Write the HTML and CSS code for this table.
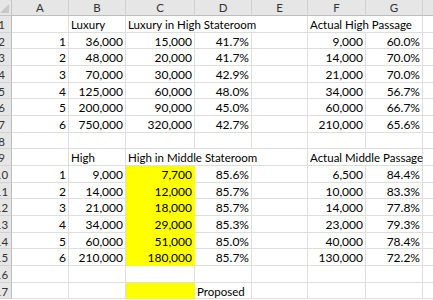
FILE: index.html
```html
<!DOCTYPE html>
<html>
<head>
<meta charset="utf-8">
<link rel="stylesheet" href="styles.css">
</head>
<body>
<div class="sheet">
  <div class="corner"></div><div class="ch">A</div><div class="ch">B</div><div class="ch">C</div><div class="ch">D</div><div class="ch">E</div><div class="ch">F</div><div class="ch">G</div><div class="ch last"></div>

  <div class="rh">1</div><div class="c"></div><div class="c">Luxury</div><div class="c span3">Luxury in High Stateroom</div><div class="c span2">Actual High Passage</div><div class="c"></div>
  <div class="rh">2</div><div class="c n">1</div><div class="c n">36,000</div><div class="c n">15,000</div><div class="c n">41.7%</div><div class="c"></div><div class="c n">9,000</div><div class="c n">60.0%</div><div class="c"></div>
  <div class="rh">3</div><div class="c n">2</div><div class="c n">48,000</div><div class="c n">20,000</div><div class="c n">41.7%</div><div class="c"></div><div class="c n">14,000</div><div class="c n">70.0%</div><div class="c"></div>
  <div class="rh">4</div><div class="c n">3</div><div class="c n">70,000</div><div class="c n">30,000</div><div class="c n">42.9%</div><div class="c"></div><div class="c n">21,000</div><div class="c n">70.0%</div><div class="c"></div>
  <div class="rh">5</div><div class="c n">4</div><div class="c n">125,000</div><div class="c n">60,000</div><div class="c n">48.0%</div><div class="c"></div><div class="c n">34,000</div><div class="c n">56.7%</div><div class="c"></div>
  <div class="rh">6</div><div class="c n">5</div><div class="c n">200,000</div><div class="c n">90,000</div><div class="c n">45.0%</div><div class="c"></div><div class="c n">60,000</div><div class="c n">66.7%</div><div class="c"></div>
  <div class="rh">7</div><div class="c n">6</div><div class="c n">750,000</div><div class="c n">320,000</div><div class="c n">42.7%</div><div class="c"></div><div class="c n">210,000</div><div class="c n">65.6%</div><div class="c"></div>
  <div class="rh">8</div><div class="c"></div><div class="c"></div><div class="c"></div><div class="c"></div><div class="c"></div><div class="c"></div><div class="c"></div><div class="c"></div>

  <div class="rh">9</div><div class="c"></div><div class="c">High</div><div class="c span3">High in Middle Stateroom</div><div class="c span2">Actual Middle Passage</div><div class="c"></div>
  <div class="rh">10</div><div class="c n">1</div><div class="c n">9,000</div><div class="c n y">7,700</div><div class="c n">85.6%</div><div class="c"></div><div class="c n">6,500</div><div class="c n">84.4%</div><div class="c"></div>
  <div class="rh">11</div><div class="c n">2</div><div class="c n">14,000</div><div class="c n y">12,000</div><div class="c n">85.7%</div><div class="c"></div><div class="c n">10,000</div><div class="c n">83.3%</div><div class="c"></div>
  <div class="rh">12</div><div class="c n">3</div><div class="c n">21,000</div><div class="c n y">18,000</div><div class="c n">85.7%</div><div class="c"></div><div class="c n">14,000</div><div class="c n">77.8%</div><div class="c"></div>
  <div class="rh">13</div><div class="c n">4</div><div class="c n">34,000</div><div class="c n y">29,000</div><div class="c n">85.3%</div><div class="c"></div><div class="c n">23,000</div><div class="c n">79.3%</div><div class="c"></div>
  <div class="rh">14</div><div class="c n">5</div><div class="c n">60,000</div><div class="c n y">51,000</div><div class="c n">85.0%</div><div class="c"></div><div class="c n">40,000</div><div class="c n">78.4%</div><div class="c"></div>
  <div class="rh">15</div><div class="c n">6</div><div class="c n">210,000</div><div class="c n y">180,000</div><div class="c n">85.7%</div><div class="c"></div><div class="c n">130,000</div><div class="c n">72.2%</div><div class="c"></div>
  <div class="rh">16</div><div class="c"></div><div class="c"></div><div class="c"></div><div class="c"></div><div class="c"></div><div class="c"></div><div class="c"></div><div class="c"></div>
  <div class="rh">17</div><div class="c"></div><div class="c"></div><div class="c y"></div><div class="c">Proposed</div><div class="c"></div><div class="c"></div><div class="c"></div><div class="c"></div>
</div>
</body>
</html>
```
FILE: styles.css
```css
html, body {
  margin: 0;
  padding: 0;
  background: #ffffff;
  overflow: hidden;
  width: 433px;
  height: 300px;
}
.sheet {
  margin-left: -8px;
  display: grid;
  grid-template-columns: 20px 57px 57px 69px 57px 56px 58px 57px 40px;
  grid-template-rows: 16px;
  grid-auto-rows: 16.667px;
  font-family: Lato, "Open Sans", sans-serif;
  font-size: 11.5px;
  color: #000;
}
.corner {
  background: #e6e6e6;
  border-right: 1px solid #c4c4c4;
  border-bottom: 1px solid #c4c4c4;
  box-sizing: border-box;
  position: relative;
}
.corner::after {
  content: "";
  position: absolute;
  right: 2px;
  bottom: 2px;
  border-left: 9px solid transparent;
  border-bottom: 9px solid #c8c8c8;
}
.ch {
  background: #e6e6e6;
  border-right: 1px solid #d2d2d2;
  border-bottom: 1px solid #bdbdbd;
  box-sizing: border-box;
  text-align: center;
  line-height: 16px;
  color: #333;
}
.rh {
  background: #e6e6e6;
  border-right: 1px solid #bdbdbd;
  border-bottom: 1px solid #d2d2d2;
  box-sizing: border-box;
  text-align: center;
  padding-top: 1px;
  line-height: 16px;
  color: #333;
}
.c {
  border-right: 1px solid #dedede;
  border-bottom: 1px solid #dedede;
  box-sizing: border-box;
  padding: 1px 2px 0;
  line-height: 16px;
  white-space: nowrap;
  overflow: visible;
}
.n {
  text-align: right;
  font-size: 12px;
}
.span3 {
  grid-column: span 3;
}
.span2 {
  grid-column: span 2;
}
.y {
  background: #ffff00;
  border-color: #ffff00;
}
```
